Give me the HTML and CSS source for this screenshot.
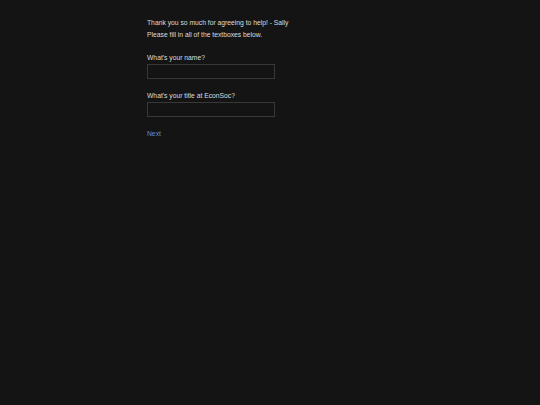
FILE: index.html
```html
<!DOCTYPE html>
<html>
<head>
<meta charset="utf-8">
<link rel="stylesheet" href="styles.css">
</head>
<body>
<main class="page">
  <p class="intro">Thank you so much for agreeing to help! - Sally</p>
  <p class="intro">Please fill in all of the textboxes below.</p>
  <div class="field">
    <label class="label">What's your name?</label>
    <input class="box" type="text">
  </div>
  <div class="field">
    <label class="label">What's your title at EconSoc?</label>
    <input class="box" type="text">
  </div>
  <a class="next" href="#">Next</a>
</main>
</body>
</html>
```
FILE: styles.css
```css
html, body {
  margin: 0;
  padding: 0;
  background: #141414;
}
body {
  font-family: "Liberation Sans", Arial, sans-serif;
  font-size: 6.75px;
  color: #dcdcdc;
}
.page {
  width: 246px;
  margin: 0 auto;
  padding-top: 17px;
  display: flex;
  flex-direction: column;
}
.intro {
  margin: 0;
  line-height: 12px;
  height: 12px;
}
.field {
  display: flex;
  flex-direction: column;
  margin-top: 12px;
}
.field + .field {
  margin-top: 12px;
}
.label {
  line-height: 10px;
  height: 10px;
  margin-bottom: 1px;
}
.box {
  box-sizing: border-box;
  width: 128px;
  height: 15px;
  margin: 0;
  padding: 0 3px;
  background: #141414;
  border: 1px solid #383838;
  color: #dcdcdc;
  font: inherit;
  outline: none;
}
.next {
  margin-top: 12px;
  color: #6a8bd0;
  text-decoration: none;
  line-height: 10px;
  align-self: flex-start;
}
```
